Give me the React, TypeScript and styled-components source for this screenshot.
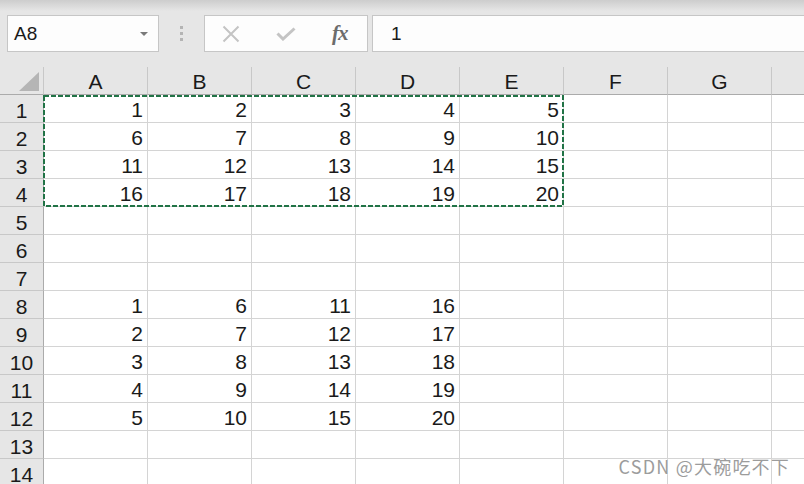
import * as React from 'react';
import styled, { createGlobalStyle } from 'styled-components';

const GlobalStyle = createGlobalStyle`
    html, body {
        margin: 0;
        padding: 0;
        overflow: hidden;
        background: #e6e6e6;
    }
`;

const COLUMNS = ['A', 'B', 'C', 'D', 'E', 'F', 'G', ''];
const ROW_COUNT = 14;

const values: Record<number, (number | null)[]> = {
    1: [1, 2, 3, 4, 5],
    2: [6, 7, 8, 9, 10],
    3: [11, 12, 13, 14, 15],
    4: [16, 17, 18, 19, 20],
    8: [1, 6, 11, 16],
    9: [2, 7, 12, 17],
    10: [3, 8, 13, 18],
    11: [4, 9, 14, 19],
    12: [5, 10, 15, 20],
};

const Window = styled.div`
    position: relative;
    width: 804px;
    height: 484px;
    overflow: hidden;
    display: flex;
    flex-direction: column;
    background: #e6e6e6;
    font-family: 'Liberation Sans', Arial, sans-serif;
    color: #1a1a1a;
`;

const FormulaBar = styled.div`
    flex-shrink: 0;
    height: 67px;
    box-sizing: border-box;
    padding: 15px 0 0 7px;
    display: flex;
    align-items: flex-start;
    background: linear-gradient(#cdcdcd 0px, #e6e6e6 11px);
`;

const Box = styled.div`
    height: 37px;
    box-sizing: border-box;
    border: 1px solid #c6c6c6;
    background: #fdfdfd;
    display: flex;
    align-items: center;
`;

const NameBox = styled(Box)`
    width: 152px;
    padding: 0 10px 0 6px;
    justify-content: space-between;
    font-size: 19px;
`;

const Caret = styled.span`
    width: 0;
    height: 0;
    border-left: 4px solid transparent;
    border-right: 4px solid transparent;
    border-top: 4px solid #7a7a7a;
    margin-top: 1px;
`;

const Grip = styled.div`
    width: 45px;
    height: 37px;
    display: flex;
    flex-direction: column;
    align-items: center;
    justify-content: center;
    gap: 3px;
`;

const GripDot = styled.span`
    width: 3px;
    height: 3px;
    background: #b4b4b4;
`;

const ActionBox = styled(Box)`
    width: 164px;
    padding: 0 0 0 17px;
`;

const ActionIcon = styled.span`
    width: 54px;
    display: flex;
    align-items: center;
`;

const Fx = styled.span`
    font-family: 'Liberation Serif', 'Times New Roman', serif;
    font-style: italic;
    font-weight: bold;
    font-size: 21px;
    color: #6c6c6c;
    margin-left: 2px;
    letter-spacing: -1px;
`;

const FormulaInput = styled(Box)`
    flex: 1;
    margin-left: 4px;
    border-right: none;
    padding-left: 18px;
    font-size: 19px;
`;

const Sheet = styled.div`
    position: relative;
    flex: 1;
    display: grid;
    grid-template-columns: 44px repeat(7, 104px) 1fr;
    grid-auto-rows: 28px;
    align-content: start;
    background: #ffffff;
`;

const Corner = styled.div`
    background: #e6e6e6;
    border-right: 1px solid #c8c8c8;
    border-bottom: 1px solid #ababab;
    display: flex;
    align-items: flex-end;
    justify-content: flex-end;
    padding: 0 4px 3px 0;
`;

const ColHeader = styled.div<{ $last?: boolean }>`
    box-sizing: border-box;
    background: #e6e6e6;
    border-right: ${(p) => (p.$last ? 'none' : '1px solid #c8c8c8')};
    border-bottom: 1px solid #ababab;
    text-align: center;
    font-size: 21px;
    line-height: 25px;
    padding-top: 2px;
    overflow: hidden;
`;

const RowHeader = styled.div`
    box-sizing: border-box;
    background: #e6e6e6;
    border-right: 1px solid #ababab;
    border-bottom: 1px solid #c8c8c8;
    text-align: center;
    font-size: 21px;
    line-height: 25px;
    padding-top: 3px;
    overflow: hidden;
`;

const Cell = styled.div<{ $last?: boolean }>`
    box-sizing: border-box;
    border-right: ${(p) => (p.$last ? 'none' : '1px solid #d4d4d4')};
    border-bottom: 1px solid #d4d4d4;
    text-align: right;
    padding: 3px 4px 0 0;
    font-size: 21px;
    line-height: 24px;
    overflow: hidden;
`;

const Marquee = styled.svg`
    position: absolute;
    left: 43px;
    top: 28px;
    width: 521px;
    height: 112px;
    pointer-events: none;
`;

const Watermark = styled.div`
    position: absolute;
    right: 14px;
    bottom: 8px;
    font-family: 'Noto Sans CJK SC', 'Noto Sans', sans-serif;
    font-size: 18px;
    letter-spacing: 1.2px;
    color: #9c9c9c;
    text-shadow: 0 0 2px #ffffff, 0 0 1px #ffffff;
`;

export default function App() {
    const rows = Array.from({ length: ROW_COUNT }, (_, i) => i + 1);
    return (
        <Window>
            <GlobalStyle />
            <FormulaBar>
                <NameBox>
                    <span>A8</span>
                    <Caret />
                </NameBox>
                <Grip>
                    <GripDot />
                    <GripDot />
                    <GripDot />
                </Grip>
                <ActionBox>
                    <ActionIcon>
                        <svg width="18" height="18" viewBox="0 0 18 18">
                            <path d="M1.5 1.5 L16.5 16.5 M16.5 1.5 L1.5 16.5" stroke="#c4c4c4" strokeWidth="2" fill="none" />
                        </svg>
                    </ActionIcon>
                    <ActionIcon>
                        <svg width="20" height="14" viewBox="0 0 20 14">
                            <path d="M1.5 6.5 L7 12 L18.5 1.5" stroke="#c4c4c4" strokeWidth="3" fill="none" />
                        </svg>
                    </ActionIcon>
                    <Fx>fx</Fx>
                </ActionBox>
                <FormulaInput>1</FormulaInput>
            </FormulaBar>
            <Sheet>
                <Corner>
                    <svg width="20" height="19" viewBox="0 0 20 19">
                        <path d="M20 0 L20 19 L0 19 Z" fill="#b5b5b5" />
                    </svg>
                </Corner>
                {COLUMNS.map((c, i) => (
                    <ColHeader key={c || 'H'} $last={i === COLUMNS.length - 1}>
                        {c}
                    </ColHeader>
                ))}
                {rows.map((r) => (
                    <React.Fragment key={r}>
                        <RowHeader>{r}</RowHeader>
                        {COLUMNS.map((c, i) => (
                            <Cell key={c || 'H'} $last={i === COLUMNS.length - 1}>
                                {values[r]?.[i] ?? ''}
                            </Cell>
                        ))}
                    </React.Fragment>
                ))}
                <Marquee viewBox="0 0 521 112">
                    <rect x="1" y="1" width="519" height="110" fill="none" stroke="#217346" strokeWidth="2" strokeDasharray="5 2" />
                </Marquee>
                <Watermark>CSDN @大碗吃不下</Watermark>
            </Sheet>
        </Window>
    );
}
